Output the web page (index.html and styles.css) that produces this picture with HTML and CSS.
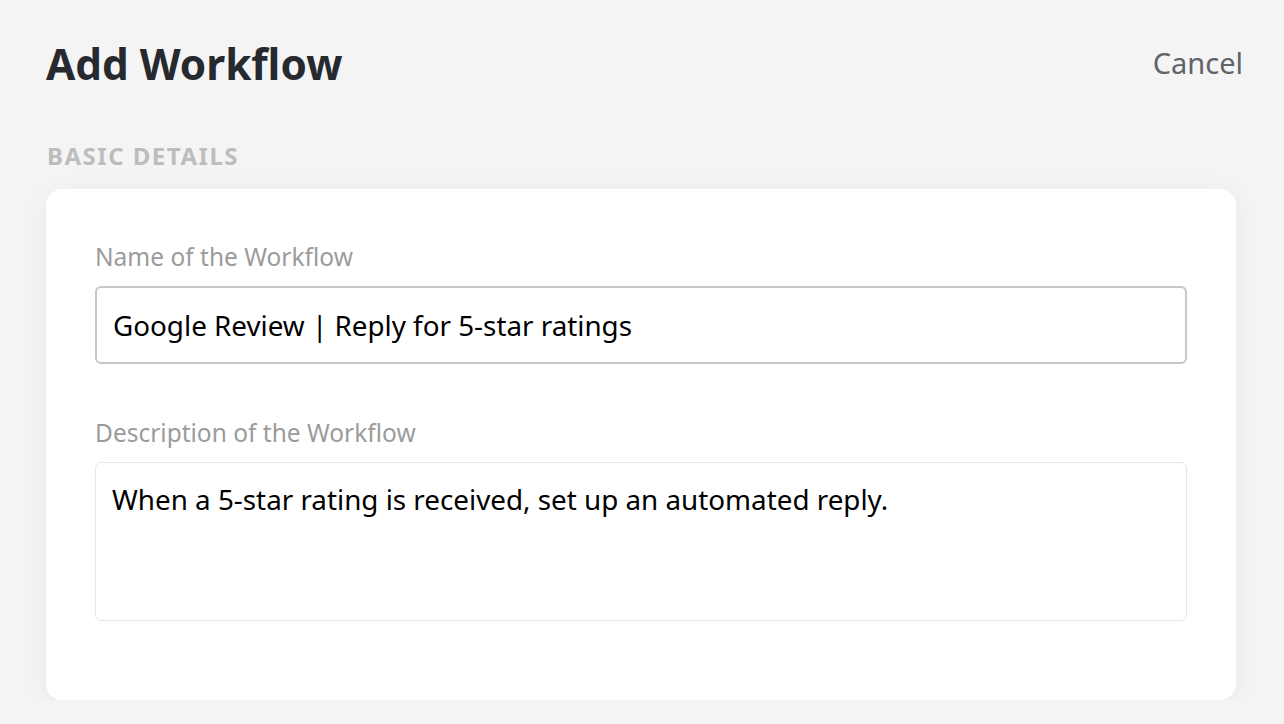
FILE: index.html
```html
<!DOCTYPE html>
<html lang="en">
<head>
<meta charset="utf-8">
<title>Add Workflow</title>
<link rel="stylesheet" href="styles.css">
</head>
<body>
<main class="page">
  <header class="header">
    <h1 class="title">Add Workflow</h1>
    <a class="cancel" href="#">Cancel</a>
  </header>
  <h2 class="section-title">BASIC DETAILS</h2>
  <section class="card">
    <label class="field">
      <span class="field-label">Name of the Workflow</span>
      <input class="text-input" type="text" value="Google Review | Reply for 5-star ratings">
    </label>
    <label class="field field-desc">
      <span class="field-label">Description of the Workflow</span>
      <textarea class="text-area">When a 5-star rating is received, set up an automated reply.</textarea>
    </label>
  </section>
</main>
</body>
</html>
```

FILE: styles.css
```css
* { box-sizing: border-box; }
html, body {
  margin: 0;
  padding: 0;
  background: #f4f4f4;
  font-family: "Noto Sans", "Liberation Sans", sans-serif;
}
.page {
  padding: 36px 48px 0 46px;
}
.header {
  display: flex;
  justify-content: space-between;
  align-items: flex-start;
}
.title {
  margin: 0;
  font-size: 42.3px;
  line-height: 56px;
  font-weight: 700;
  color: #26292e;
}
.cancel {
  margin: 7px -7px 0 0;
  font-size: 29px;
  line-height: 40px;
  color: #5f636a;
  text-decoration: none;
}
.section-title {
  margin: 49px 0 0 1px;
  font-size: 24px;
  line-height: 30px;
  font-weight: 700;
  letter-spacing: 1.5px;
  color: #bdbdbd;
}
.card {
  margin-top: 18px;
  background: #fff;
  border-radius: 16px;
  padding: 51px 49px 79px;
  box-shadow: 0 4px 28px rgba(0, 0, 0, 0.05);
}
.field {
  display: flex;
  flex-direction: column;
  gap: 12px;
}
.field-desc {
  margin-top: 52px;
}
.field-label {
  font-size: 24.5px;
  line-height: 34px;
  color: #9b9b9b;
}
.text-input, .text-area {
  font-family: inherit;
  font-size: 27.8px;
  color: #000;
  background: #fff;
  outline: none;
  border-radius: 6px;
  width: 100%;
  margin: 0;
}
.text-input {
  height: 78px;
  border: 2px solid #c7c7c7;
  padding: 0 16px;
}
.text-area {
  height: 159px;
  border: 1px solid #e6e6e6;
  padding: 16px 16px;
  line-height: 40px;
  resize: none;
  display: block;
}
```
